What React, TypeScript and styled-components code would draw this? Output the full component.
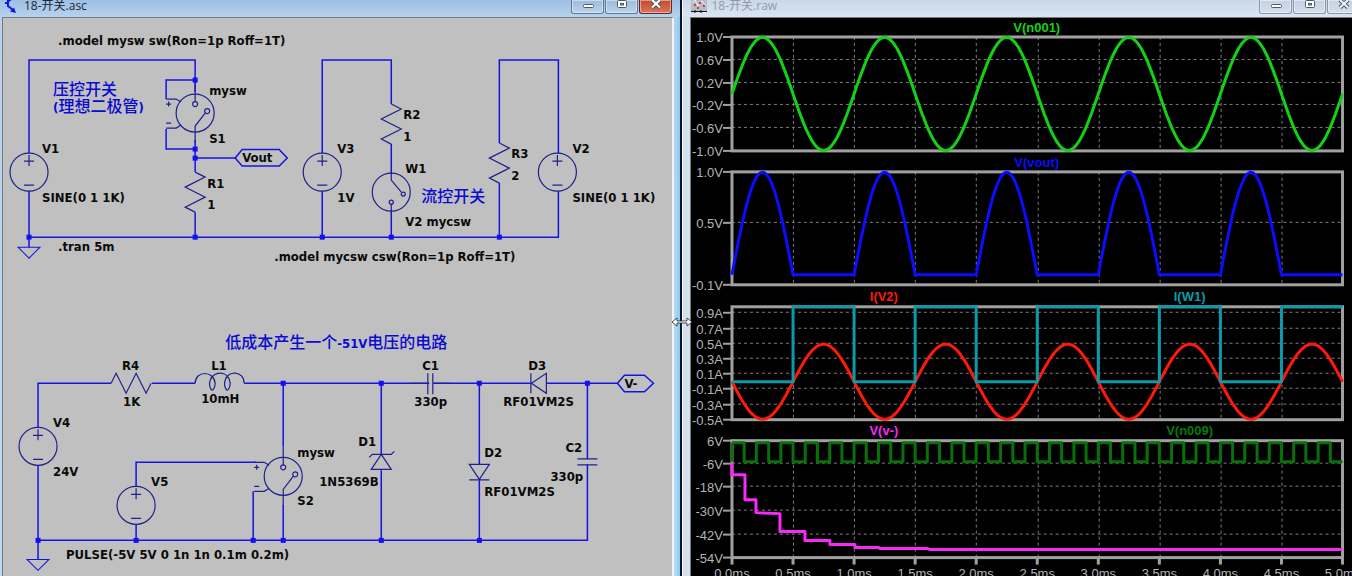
import React from 'react';
import styled, { createGlobalStyle } from 'styled-components';

const GlobalStyle = createGlobalStyle`
  * { box-sizing: border-box; }
  body { margin: 0; background: #000; overflow: hidden; }
`;

const uiFont = `"Open Sans", "Noto Sans CJK SC", sans-serif`;
const inactive = '#d5e0ee';

const Desktop = styled.main`
  display: flex;
  height: 100vh;
  overflow: hidden;
`;

const Pane = styled.section<{ $grow: number; $active?: boolean }>`
  flex: ${(p) => p.$grow} 1 0;
  min-width: 0;
  display: flex;
  flex-direction: column;
  overflow: hidden;
  background: ${(p) =>
    p.$active
      ? 'linear-gradient(90deg, transparent calc(100% - 5px), #84cbf8), linear-gradient(180deg, #b4d0ee, #b9d3ee 80px, #b9dcf4)'
      : inactive};
  border-left: ${(p) => (p.$active ? '0' : '1px solid #f4f8fc')};
  border-right: ${(p) => (p.$active ? '2px solid #10151c' : '0')};
`;

const TitleBar = styled.header<{ $active?: boolean }>`
  display: flex;
  align-items: flex-start;
  height: 17px;
  padding-left: ${(p) => (p.$active ? '4px' : '8px')};
  gap: 4px;
  background: ${(p) =>
    p.$active
      ? 'linear-gradient(180deg, #9dbfe3, #b7d2ee)'
      : 'linear-gradient(180deg, #cbd8e8, #d9e5f2)'};
`;

const Title = styled.h1<{ $active?: boolean }>`
  flex: 1;
  margin: 0;
  font: 400 12px/12px ${uiFont};
  color: ${(p) => (p.$active ? '#1c2733' : '#8e9aa8')};
  white-space: nowrap;
`;

const Controls = styled.div<{ $clipped?: boolean }>`
  display: flex;
  gap: 1px;
  margin-right: ${(p) => (p.$clipped ? '-8px' : '8px')};
`;

const ControlButton = styled.button<{ $kind: 'active' | 'inactive' | 'close' }>`
  display: flex;
  justify-content: center;
  width: 33px;
  height: 14px;
  padding: 0;
  border: 1px solid ${(p) => (p.$kind === 'close' ? '#5c2a2c' : p.$kind === 'active' ? '#5f7893' : '#8796a8')};
  border-top: 0;
  border-radius: 0 0 3px 3px;
  box-shadow: inset 0 0 0 1px rgba(255, 255, 255, 0.45);
  background: ${(p) =>
    p.$kind === 'close'
      ? 'linear-gradient(180deg, #c4492c, #d9765a)'
      : p.$kind === 'active'
        ? 'linear-gradient(180deg, #9bb9da, #bdd4ec)'
        : 'linear-gradient(180deg, #c3d1e1, #d3dfec)'};
`;

const Client = styled.div<{ $dark?: boolean }>`
  flex: 1;
  min-height: 0;
  overflow: hidden;
  margin-left: ${(p) => (p.$dark ? '7px' : '2px')};
  margin-right: ${(p) => (p.$dark ? '0' : '6px')};
  border-top: 1px solid #77797d;
  border-left: 1px solid #77797d;
  border-right: ${(p) => (p.$dark ? '0' : '2px solid #eef4fa')};
  background: ${(p) => (p.$dark ? '#000' : '#c0c0c0')};
`;

const Drawing = styled.svg`
  display: block;
  width: 100%;
  height: auto;
`;

const Label = styled.text`
  font: 700 13px "DejaVu Sans Condensed", "DejaVu Sans", sans-serif;
  fill: #0a0a0a;
`;

const Comment = styled.text`
  font: 500 16px "Noto Sans CJK SC", sans-serif;
  fill: #0a0ad0;
`;

const Latin = styled.tspan`
  font: 700 13px "DejaVu Sans Condensed", "DejaVu Sans", sans-serif;
`;

const AxisText = styled.text`
  font: 400 13px "Liberation Sans", sans-serif;
  fill: #b4b4b4;
`;

const TraceName = styled.text`
  font: 700 13px "Liberation Sans", sans-serif;
  text-anchor: middle;
`;

const Cursor = styled.svg`
  position: absolute;
  left: 50.44%;
  top: 56%;
  width: 22px;
  height: 10px;
  margin: -6px 0 0 -11px;
`;

const MinIcon = () => (
  <svg width="14" height="12"><rect x="2.500" y="4.500" width="10" height="3" rx="1" fill="#fff" stroke="#4c5868" /></svg>
);
const MaxIcon = () => (
  <svg width="14" height="12">
    <rect x="2.500" y="0.500" width="9" height="7" rx="1" fill="#fff" stroke="#4c5868" />
    <rect x="5.500" y="3.500" width="3" height="1.500" fill="#9bb" stroke="#4c5868" />
  </svg>
);
const CloseIcon = ({ dim }: { dim?: boolean }) => (
  <svg width="14" height="12">
    <path d="M3 0L11 7.500M11 0L3 7.500" stroke="#4a4f5c" strokeWidth="4" />
    <path d="M3 0L11 7.500M11 0L3 7.500" stroke={dim ? '#eef2f6' : '#fff'} strokeWidth="2.200" />
  </svg>
);

const WindowControls = ({ active }: { active?: boolean }) => (
  <Controls $clipped={!active}>
    <ControlButton $kind={active ? 'active' : 'inactive'} aria-label="Minimize"><MinIcon /></ControlButton>
    <ControlButton $kind={active ? 'active' : 'inactive'} aria-label="Maximize"><MaxIcon /></ControlButton>
    <ControlButton $kind={active ? 'close' : 'inactive'} aria-label="Close"><CloseIcon dim={!active} /></ControlButton>
  </Controls>
);

const part = '#20208c';
const wire = '#1414e0';

const Source = ({ x, y }: { x: number; y: number }) => (
  <g transform={`translate(${x} ${y})`} stroke={part} strokeWidth="1.200" fill="none">
    <circle r="19" />
    <path d="M-5 -11H5M0 -17V-6M-5 13H5" />
  </g>
);

const Resistor = ({ x, y, turn = 0 }: { x: number; y: number; turn?: number }) => (
  <path
    transform={`translate(${x} ${y}) rotate(${turn})`}
    d="M0 -20L10 -15L-10 -5L10 5L-10 15L0 20"
    stroke={part}
    strokeWidth="1.200"
    fill="none"
  />
);

const VoltageSwitch = ({ x, y }: { x: number; y: number }) => (
  <g transform={`translate(${x} ${y})`} stroke={part} strokeWidth="1.200" fill="none">
    <circle r="19" />
    <circle cy="-9" r="2.500" />
    <circle cx="12" cy="-2" r="2.500" />
    <path d="M0 -30V-11M10 0L0 13V30M-29 -14H-19L-14 -11M-29 15H-19L-14 12M-29 -9H-24M-26.500 -11.500V-6.500M-29 10H-24" />
  </g>
);

const Ground = ({ x, y }: { x: number; y: number }) => (
  <path d={`M${x - 11} ${y}H${x + 11}L${x} ${y + 11}Z`} stroke={wire} fill="none" />
);

const nodes = [
  [195, 80], [195, 149], [195, 158], [29, 237], [195, 237], [322, 237], [391, 237], [499, 237],
  [283, 383], [381, 383], [479, 383], [587, 383],
  [38, 540], [136, 540], [253, 540], [283, 540], [381, 540], [479, 540],
];

const labels: [number, number, string][] = [
  [58, 45, '.model mysw sw(Ron=1p Roff=1T)'],
  [42, 153, 'V1'], [42, 202, 'SINE(0 1 1K)'], [58, 251, '.tran 5m'],
  [209, 95, 'mysw'], [209, 143, 'S1'], [242, 162, 'Vout'], [207, 188, 'R1'], [207, 209, '1'],
  [337, 153, 'V3'], [337, 202, '1V'], [403, 119, 'R2'], [403, 141, '1'], [405, 173, 'W1'],
  [405, 226, 'V2 mycsw'], [511, 158, 'R3'], [511, 180, '2'], [572, 153, 'V2'],
  [572, 202, 'SINE(0 1 1K)'], [274, 261, '.model mycsw csw(Ron=1p Roff=1T)'],
  [122, 370, 'R4'], [123, 406, '1K'], [211, 370, 'L1'], [201, 403, '10mH'],
  [53, 427, 'V4'], [53, 476, '24V'], [151, 486, 'V5'], [297, 457, 'mysw'], [297, 505, 'S2'],
  [66, 559, 'PULSE(-5V 5V 0 1n 1n 0.1m 0.2m)'],
  [358, 446, 'D1'], [319, 486, '1N5369B'], [422, 370, 'C1'], [414, 406, '330p'],
  [484, 457, 'D2'], [484, 496, 'RF01VM2S'], [528, 370, 'D3'], [503, 406, 'RF01VM2S'],
  [565, 452, 'C2'], [550, 481, '330p'], [624, 388, 'V-'],
];

const Schematic = () => (
  <Drawing viewBox="3 18 669 558" role="img" aria-label="Circuit schematic">
    <g stroke={wire} fill="none" strokeWidth="1.500">
      <path d="M29 153V60H195V92M195 80H166V99M166 129V149H195M195 140V172M195 158H235M195 212V237M29 191V247M29 237H558V191M322 191V237M322 153V60H391V104M391 144V174M391 210V237M499 183V237M499 143V60H558V153" />
      <path d="M235 158L242 149.500H279L287 158L279 166H242ZM617 383L624 375H644L653 383L644 391.500H624Z" />
      <path d="M38 427V383H111M152 383H195M244 383H429M433 383H530M546 383H617M38 465V559M38 540H587V464M587 459V383M136 486V462H256M136 524V540M253 540V491M283 383V446M283 505V540M381 383V454M381 470V540M479 383V464M479 480V540" />
    </g>
    <Ground x={29} y={247} />
    <Ground x={38} y={559} />
    <Source x={29} y={172} />
    <Source x={322} y={172} />
    <Source x={557} y={172} />
    <Source x={38} y={446} />
    <Source x={136} y={505} />
    <VoltageSwitch x={195} y={113} />
    <VoltageSwitch x={283} y={476} />
    <Resistor x={195} y={192} />
    <Resistor x={391} y={124} />
    <Resistor x={499} y={163} />
    <Resistor x={131} y={383} turn={-90} />
    <g stroke={part} strokeWidth="1.200" fill="none">
      <circle cx="391" cy="192" r="19" />
      <circle cx="403" cy="194" r="2" />
      <circle cx="391" cy="202" r="2" />
      <path d="M391 172V180L401 192M391 204V212" />
      <path d="M195 383C195 370 214 370 215 383C215 387 213 390 212 390C209 388 209 383 210 380C213 370 229 370 230 383C230 387 228 390 227 390C224 388 224 383 225 380C227 370 244 370 244 383" />
      <path d="M427.500 373V394M432.500 373V394M410 383H427M433 383H450" />
      <path d="M577 458.500H597M577 464.500H597" />
      <path d="M546 373V393L531 383ZM530.500 373V393" />
      <path d="M371 469H391L381 454ZM369 457L372 454H391L394 451" />
      <path d="M469 464H489L479 479ZM469 479.500H489" />
    </g>
    <g fill="#1010f4">
      {nodes.map(([x, y]) => <rect key={`${x}-${y}`} x={x - 2.5} y={y - 2.5} width="5" height="5" />)}
    </g>
    {labels.map(([x, y, s]) => <Label key={`${x}-${y}`} x={x} y={y}>{s}</Label>)}
    <Comment x="53" y="95">压控开关</Comment>
    <Comment x="53" y="112"><Latin>(</Latin>理想二极管<Latin>)</Latin></Comment>
    <Comment x="421" y="202">流控开关</Comment>
    <Comment x="225" y="348">低成本产生一个<Latin>-51V</Latin>电压的电路</Comment>
  </Drawing>
);

const x0 = 732;
const x1 = 1343;
const ms = (t: number) => x0 + (t * (x1 - x0)) / 5;

const toPath = (pts: [number, number][]) =>
  'M' + pts.map(([x, y]) => `${x.toFixed(1)} ${y.toFixed(1)}`).join('L');

const sample = (fn: (t: number) => number) =>
  toPath(Array.from({ length: 501 }, (_, i) => [ms(i / 100), fn(i / 100)] as [number, number]));

const sineV = sample((t) => 94 - 56.5 * Math.sin(2 * Math.PI * t));
const rectified = sample((t) => 275 - 102.5 * Math.max(0, Math.sin(2 * Math.PI * t)));
const current = sample((t) => 382 + 37.5 * Math.sin(2 * Math.PI * t));

const square = (period: number, high: number, low: number, startHigh: boolean) => {
  const pts: [number, number][] = [];
  let up = startHigh;
  for (let i = 0; i * (period / 2) < 5 - 1e-6; i++) {
    const y = up ? high : low;
    pts.push([ms((i * period) / 2), y], [ms(((i + 1) * period) / 2), y]);
    up = !up;
  }
  return toPath(pts);
};
const switchCurrent = square(1, 307, 382, false);
const pulses = `M${x0} 462V443` + square(0.2, 443, 462, true);

const stairs: [number, number][] = [
  [732, 463], [732, 475], [745, 475], [745, 500], [756, 500], [756, 513], [780, 514], [780, 532],
  [805, 532], [805, 541], [830, 541], [830, 545], [855, 545], [855, 548], [879, 548],
  [880, 549], [928, 549], [930, 550], [1343, 550],
];

type Plot = { top: number; bottom: number; ticks: [number, string][] };

const plots: Plot[] = [
  { top: 37, bottom: 151, ticks: [[37, '1.0V'], [60, '0.6V'], [83, '0.2V'], [105, '-0.2V'], [128, '-0.6V'], [151, '-1.0V']] },
  { top: 172, bottom: 285, ticks: [[172, '1.0V'], [223, '0.5V'], [285, '-0.1V']] },
  { top: 307, bottom: 420, ticks: [[313, '0.9A'], [329, '0.7A'], [344, '0.5A'], [359, '0.3A'], [374, '0.1A'], [389, '-0.1A'], [405, '-0.3A'], [420, '-0.5A']] },
  { top: 441, bottom: 558, ticks: [[441, '6V'], [464, '-6V'], [487, '-18V'], [511, '-30V'], [535, '-42V'], [558, '-54V']] },
];

const times = ['0.0ms', '0.5ms', '1.0ms', '1.5ms', '2.0ms', '2.5ms', '3.0ms', '3.5ms', '4.0ms', '4.5ms', '5.0ms'];

const Waveforms = () => (
  <Drawing viewBox="691 18 661 558" role="img" aria-label="Simulation waveforms">
    {plots.map((p) => (
      <g key={p.top}>
        <g stroke="#7c7c7c" strokeDasharray="3 3">
          {times.slice(1, -1).map((t, i) => <path key={t} d={`M${Math.round(ms((i + 1) / 2)) + 0.5} ${p.top}V${p.bottom}`} />)}
          {p.ticks.filter(([y]) => y > p.top && y < p.bottom).map(([y]) => <path key={y} d={`M${x0} ${y - 0.5}H${x1}`} />)}
        </g>
        <rect x={x0} y={p.top} width={x1 - x0} height={p.bottom - p.top} fill="none" stroke="#a0a0a0" strokeWidth="3" />
        {p.ticks.map(([y, s]) => (
          <g key={s}>
            <path d={`M723 ${y}H732`} stroke="#a0a0a0" strokeWidth="2" />
            <AxisText x="723" y={y + 5} textAnchor="end">{s}</AxisText>
          </g>
        ))}
      </g>
    ))}
    {times.map((t, i) => (
      <g key={t}>
        <path d={`M${ms(i / 2)} 558V565`} stroke="#a0a0a0" strokeWidth="3" />
        <AxisText x={ms(i / 2)} y="578" textAnchor="middle">{t}</AxisText>
      </g>
    ))}
    <g fill="none" strokeWidth="3" strokeLinejoin="round">
      <path d={sineV} stroke="#12d312" />
      <path d={rectified} stroke="#0c0cff" />
      <path d={current} stroke="#ff1a08" />
      <path d={switchCurrent} stroke="#0a9aaa" />
      <path d={pulses} stroke="#087008" />
      <path d={toPath(stairs)} stroke="#fa28fa" />
    </g>
    <TraceName x="1037" y="32" fill="#14d214">V(n001)</TraceName>
    <TraceName x="1037" y="167" fill="#0c0cff">V(vout)</TraceName>
    <TraceName x="884" y="301" fill="#ff1a08">I(V2)</TraceName>
    <TraceName x="1190" y="301" fill="#0a9aaa">I(W1)</TraceName>
    <TraceName x="884" y="435" fill="#fa28fa">V(v-)</TraceName>
    <TraceName x="1190" y="435" fill="#087808">V(n009)</TraceName>
  </Drawing>
);

export default function App() {
  return (
    <>
      <GlobalStyle />
      <Desktop>
        <Pane $grow={682} $active>
          <TitleBar $active>
            <svg width="16" height="14" fill="none" stroke="#1414e0" strokeWidth="2">
              <path d="M4 -2V7M1 3H4M7 -1L5 1M4 6L9 10" />
              <path d="M12 13L6 11.500L10 7.500Z" fill="#1414e0" stroke="none" />
            </svg>
            <Title $active>18-开关.asc</Title>
            <WindowControls active />
          </TitleBar>
          <Client><Schematic /></Client>
        </Pane>
        <Pane $grow={670}>
          <TitleBar>
            <svg width="16" height="14">
              <rect width="16" height="11" fill="#b4bcc8" />
              <path d="M1 3L4 0L7 6L11 1L15 6" stroke="#eef" fill="none" />
              <path d="M3 4h2v2h-2zM8 2h2v2h-2zM6 7h2v2h-2zM12 5h2v2h-2z" fill="#d83838" />
              <path d="M0 11.500H16M4 10V13M10 10V13" stroke="#111" />
            </svg>
            <Title>18-开关.raw</Title>
            <WindowControls />
          </TitleBar>
          <Client $dark><Waveforms /></Client>
        </Pane>
      </Desktop>
      <Cursor viewBox="0 0 22 10">
        <path d="M1 5L6 1V4H16V1L21 5L16 9V6H6V9Z" fill="#fff" stroke="#222" strokeWidth="0.800" />
      </Cursor>
    </>
  );
}
